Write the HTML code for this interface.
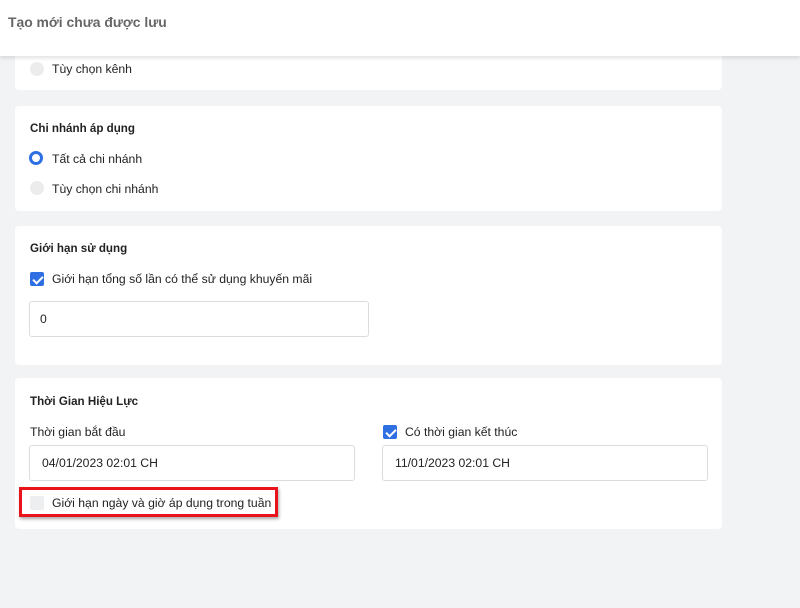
<!DOCTYPE html>
<html><head><meta charset="utf-8"><style>
*{box-sizing:border-box;margin:0;padding:0}
body{width:800px;height:608px;background:#f2f3f4;font-family:"Liberation Sans",sans-serif;font-size:12.2px;color:#222;position:relative;overflow:hidden}
.hdr{position:absolute;left:0;top:0;width:800px;height:56px;background:#fff;box-shadow:0 2px 4px rgba(0,0,0,.12);z-index:2}
.hdr span{position:absolute;left:8px;top:14px;font-size:13.9px;font-weight:bold;color:#666}
.card{position:absolute;left:15px;width:707px;background:#fff;border-radius:4px}
.t{position:absolute;font-size:12.2px}
.b{font-weight:bold;font-size:11.6px}
.rad{position:absolute;width:14px;height:14px;border-radius:50%}
.cb{position:absolute;width:14px;height:14px;border-radius:2px;background:#2f6fe4}
.cb:after{content:"";position:absolute;left:4.5px;top:1.5px;width:4px;height:8px;border:solid #fff;border-width:0 2px 2px 0;transform:rotate(45deg)}
.inp{position:absolute;background:#fff;border:1px solid #dcdcdc;border-radius:3px;height:36px;padding-left:10px;line-height:34px;font-size:12.2px}
</style></head><body>
<div class="hdr"><span>Tạo mới chưa được lưu</span></div>
<div class="card" style="top:40px;height:50px"></div>
<div class="rad" style="left:30px;top:62px;background:#ececec"></div>
<div class="t" style="left:52px;top:62px">Tùy chọn kênh</div>

<div class="card" style="top:106px;height:105px"></div>
<div class="t b" style="left:30px;top:122px">Chi nhánh áp dụng</div>
<div class="rad" style="left:29px;top:151px;border:3.5px solid #2f6fe4;background:#fff"></div>
<div class="t" style="left:52px;top:152px">Tất cả chi nhánh</div>
<div class="rad" style="left:30px;top:181px;background:#ececec"></div>
<div class="t" style="left:52px;top:182px">Tùy chọn chi nhánh</div>

<div class="card" style="top:226px;height:139px"></div>
<div class="t b" style="left:30px;top:242px">Giới hạn sử dụng</div>
<div class="cb" style="left:30px;top:272px"></div>
<div class="t" style="left:52px;top:272px">Giới hạn tổng số lần có thể sử dụng khuyến mãi</div>
<div class="inp" style="left:29px;top:301px;width:340px">0</div>

<div class="card" style="top:378px;height:151px"></div>
<div class="t b" style="left:30px;top:395px">Thời Gian Hiệu Lực</div>
<div class="t" style="left:30px;top:425px">Thời gian bắt đầu</div>
<div class="inp" style="left:29px;top:445px;width:326px;padding-left:12px">04/01/2023 02:01 CH</div>
<div class="cb" style="left:383px;top:425px"></div>
<div class="t" style="left:405px;top:425px">Có thời gian kết thúc</div>
<div class="inp" style="left:382px;top:445px;width:326px;padding-left:12px">11/01/2023 02:01 CH</div>
<div style="position:absolute;left:19px;top:487px;width:259px;height:30px;border:3px solid #e8141a;box-shadow:1px 2px 3px rgba(0,0,0,.35)"></div>
<div style="position:absolute;left:30px;top:496px;width:14px;height:14px;background:#eceef0;border-radius:2px"></div>
<div class="t" style="left:52px;top:496px">Giới hạn ngày và giờ áp dụng trong tuần</div>
</body></html>
